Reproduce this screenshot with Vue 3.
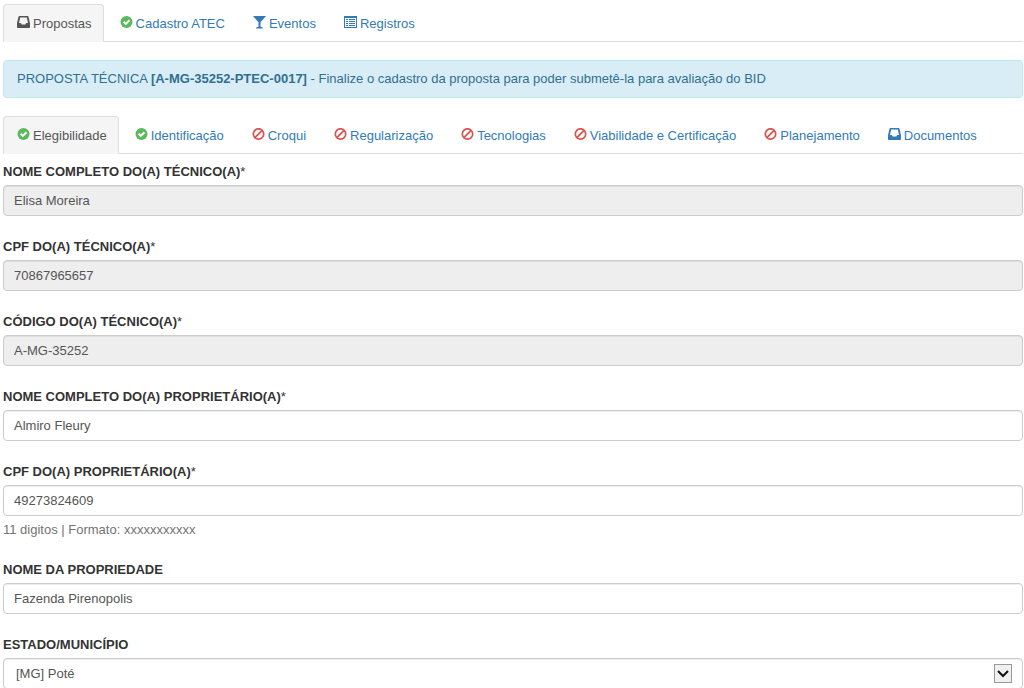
<script setup>
import { reactive } from 'vue'

const mainTabs = [
  { label: 'Propostas', icon: 'inbox', active: true },
  { label: 'Cadastro ATEC', icon: 'ok' },
  { label: 'Eventos', icon: 'glass' },
  { label: 'Registros', icon: 'list' },
]

const stepTabs = [
  { label: 'Elegibilidade', icon: 'ok', active: true },
  { label: 'Identificação', icon: 'ok' },
  { label: 'Croqui', icon: 'ban' },
  { label: 'Regularização', icon: 'ban' },
  { label: 'Tecnologias', icon: 'ban' },
  { label: 'Viabilidade e Certificação', icon: 'ban' },
  { label: 'Planejamento', icon: 'ban' },
  { label: 'Documentos', icon: 'inbox' },
]

const tabBars = [
  { name: 'Principal', tabs: mainTabs },
  { name: 'Etapas da proposta', tabs: stepTabs },
]

const fields = reactive([
  { id: 'nome-tecnico', label: 'NOME COMPLETO DO(A) TÉCNICO(A)', required: true, value: 'Elisa Moreira', disabled: true },
  { id: 'cpf-tecnico', label: 'CPF DO(A) TÉCNICO(A)', required: true, value: '70867965657', disabled: true },
  { id: 'codigo-tecnico', label: 'CÓDIGO DO(A) TÉCNICO(A)', required: true, value: 'A-MG-35252', disabled: true },
  { id: 'nome-proprietario', label: 'NOME COMPLETO DO(A) PROPRIETÁRIO(A)', required: true, value: 'Almiro Fleury' },
  { id: 'cpf-proprietario', label: 'CPF DO(A) PROPRIETÁRIO(A)', required: true, value: '49273824609', help: '11 digitos | Formato: xxxxxxxxxxx' },
  { id: 'nome-propriedade', label: 'NOME DA PROPRIEDADE', value: 'Fazenda Pirenopolis' },
])
</script>

<template>
  <main class="page">
    <template v-for="(bar, i) in tabBars" :key="bar.name">
      <nav :aria-label="bar.name">
        <ul class="tabs">
          <li v-for="tab in bar.tabs" :key="tab.label">
            <a href="#" class="tab" :class="{ active: tab.active }" @click.prevent>
              <svg class="icon" :class="tab.icon" viewBox="0 0 13 13" aria-hidden="true">
                <path v-if="tab.icon === 'inbox'" fill-rule="evenodd" d="M2.3 0H10.7Q11.3 0 11.5 .7L13 7.2V11.3Q13 12 12.3 12H.7Q0 12 0 11.3V7.2L1.5 .7Q1.7 0 2.3 0ZM3.2 1.6 2 7H3.4Q4 7 4.2 7.6L4.6 8.6H8.4L8.8 7.6Q9 7 9.6 7H11L9.8 1.6Z" />
                <template v-else-if="tab.icon === 'ok'">
                  <circle cx="6.5" cy="6" r="6" />
                  <path class="check" d="M3.7 5.8 5.8 7.9 9.5 4.2" />
                </template>
                <template v-else-if="tab.icon === 'ban'">
                  <circle class="ring" cx="6.5" cy="6" r="5.2" />
                  <path class="ring" d="M2.9 9.6 10.1 2.4" />
                </template>
                <path v-else-if="tab.icon === 'glass'" d="M0 0H13L12 1.3 7.5 6.3V10.8L9.8 11.6V12.5H3.2V11.6L5.5 10.8V6.3L1 1.3Z" />
                <path v-else fill-rule="evenodd" d="M0 0H13V12H0ZM1 2V11H12V2ZM2 3H4V4H2ZM5 3H11V4H5ZM2 5H4V6H2ZM5 5H11V6H5ZM2 7H4V8H2ZM5 7H11V8H5ZM2 9H4V10H2ZM5 9H11V10H5Z" />
              </svg>
              <span>{{ tab.label }}</span>
            </a>
          </li>
        </ul>
      </nav>
      <p v-if="i === 0" class="alert">
        PROPOSTA TÉCNICA <strong>[A-MG-35252-PTEC-0017]</strong> - Finalize o cadastro da proposta para poder submetê-la para avaliação do BID
      </p>
    </template>

    <form class="form" @submit.prevent>
      <div v-for="field in fields" :key="field.id" class="field">
        <label :for="field.id">{{ field.label }}<span v-if="field.required" class="mark">*</span></label>
        <input :id="field.id" v-model="field.value" type="text" class="control" :disabled="field.disabled" />
        <span v-if="field.help" class="help">{{ field.help }}</span>
      </div>
      <div class="field">
        <label for="municipio">ESTADO/MUNICÍPIO</label>
        <div class="select">
          <select id="municipio" class="control">
            <option>[MG] Poté</option>
          </select>
          <svg class="arrow" viewBox="0 0 18 19" aria-hidden="true">
            <rect x=".5" y=".5" width="17" height="18" />
            <path d="M4 7 9 12 14 7" />
          </svg>
        </div>
      </div>
    </form>
  </main>
</template>

<style>
body {
  background: #fff;
}
</style>

<style scoped>
.page {
  box-sizing: border-box;
  padding: 4px 1px 0 3px;
  font-family: "Liberation Sans", Arial, sans-serif;
  font-size: 13px;
  line-height: 19px;
  color: #333;
}

.tabs {
  display: flex;
  flex-wrap: wrap;
  gap: 2px;
  margin: 0;
  padding: 0;
  list-style: none;
  border-bottom: 1px solid #ddd;
}

.tab {
  display: flex;
  align-items: center;
  gap: 3px;
  margin-bottom: -1px;
  padding: 9px 11px 8px 13px;
  border: 1px solid transparent;
  border-radius: 4px 4px 0 0;
  color: #337ab7;
  text-decoration: none;
  white-space: nowrap;
}

.tab.active {
  color: #555;
  background: #f5f5f5;
  border-color: #ddd;
  border-bottom-color: #f5f5f5;
}

.icon {
  flex: none;
  width: 13px;
  height: 13px;
  margin-bottom: 2px;
  fill: currentColor;
}

.icon.ok {
  fill: #5cb85c;
}

.icon .check {
  fill: none;
  stroke: #fff;
  stroke-width: 2;
}

.icon .ring {
  fill: none;
  stroke: #d9534f;
  stroke-width: 1.7;
}

.alert {
  margin: 18px 0;
  padding: 8px 13px 9px;
  border: 1px solid #bce8f1;
  border-radius: 4px;
  background: #d9edf7;
  color: #31708f;
}

.form {
  display: flex;
  flex-direction: column;
  gap: 21px;
  padding-top: 8px;
}

.field {
  display: flex;
  flex-direction: column;
  gap: 4px;
}

label {
  font-weight: bold;
}

.mark {
  font-weight: normal;
}

.control {
  box-sizing: border-box;
  display: block;
  width: 100%;
  height: 31px;
  margin: 0;
  padding: 0 10px;
  border: 1px solid #ccc;
  border-radius: 4px;
  background: #fff;
  box-shadow: inset 0 1px 1px rgba(0, 0, 0, 0.075);
  font: inherit;
  color: #555;
}

.control:disabled {
  background: #eee;
}

.help {
  color: #737373;
}

.select {
  position: relative;
}

.select .control {
  appearance: none;
  padding: 0 32px 0 12px;
}

.arrow {
  position: absolute;
  top: 6px;
  right: 11px;
  width: 18px;
  height: 19px;
  pointer-events: none;
}

.arrow rect {
  fill: #f0f0f0;
  stroke: #999;
}

.arrow path {
  fill: none;
  stroke: #111;
  stroke-width: 2;
}
</style>
